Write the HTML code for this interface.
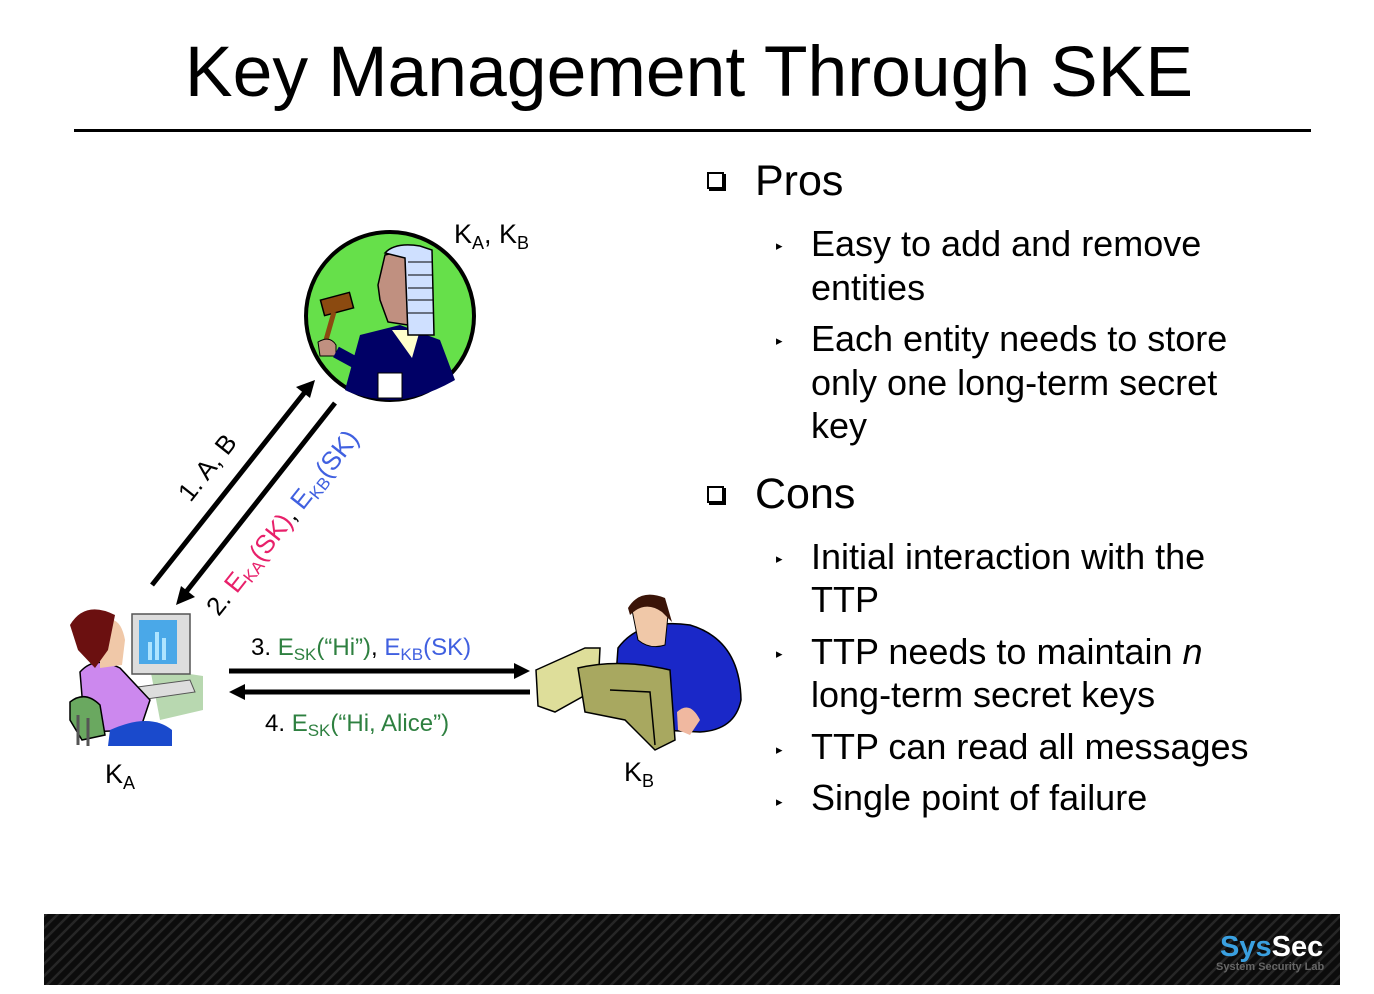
<!DOCTYPE html>
<html><head><meta charset="utf-8"><style>
html,body{margin:0;padding:0;background:#fff;}
body{width:1374px;height:994px;position:relative;overflow:hidden;font-family:"Liberation Sans","DejaVu Sans",sans-serif;}
.t{position:absolute;white-space:nowrap;color:#000;}
</style></head><body>
<div class="t" style="left:0;width:1378px;text-align:center;top:31px;font-size:71.5px;">Key Management Through SKE</div>
<div style="position:absolute;left:74px;top:129px;width:1237px;height:3px;background:#000"></div>

<div class="t" style="left:707px;top:172px;width:17px;height:17px;border:2px solid #000;box-sizing:border-box;box-shadow:2px 2px 0 #000"></div>
<div class="t" style="left:755px;top:157px;font-size:43px;">Pros</div>
<div class="t" style="left:707px;top:486px;width:17px;height:17px;border:2px solid #000;box-sizing:border-box;box-shadow:2px 2px 0 #000"></div>
<div class="t" style="left:755px;top:470px;font-size:43px;">Cons</div>

<div style="position:absolute;left:811px;top:222px;font-size:36px;line-height:43.5px;">
<div style="position:relative">Easy to add and remove<br>entities</div>
<div style="position:relative;margin-top:8px">Each entity needs to store<br>only one long-term secret<br>key</div>
<div style="position:relative;margin-top:87px">Initial interaction with the<br>TTP</div>
<div style="position:relative;margin-top:8px">TTP needs to maintain <i>n</i><br>long-term secret keys</div>
<div style="position:relative;margin-top:8px">TTP can read all messages</div>
<div style="position:relative;margin-top:8px">Single point of failure</div>
</div>
<div class="t" style="left:776px;top:238px;font-size:13px;">&#9656;</div>
<div class="t" style="left:776px;top:333px;font-size:13px;">&#9656;</div>
<div class="t" style="left:776px;top:551px;font-size:13px;">&#9656;</div>
<div class="t" style="left:776px;top:646px;font-size:13px;">&#9656;</div>
<div class="t" style="left:776px;top:742px;font-size:13px;">&#9656;</div>
<div class="t" style="left:776px;top:794px;font-size:13px;">&#9656;</div>

<svg width="1374" height="994" style="position:absolute;left:0;top:0" font-family="Liberation Sans, DejaVu Sans, sans-serif">
<circle cx="390" cy="316" r="84" fill="#66e04a" stroke="#000" stroke-width="4"/>
<path d="M345 390 L360 335 L400 325 L440 340 L455 380 Q420 400 390 400 Q360 398 345 390Z" fill="#000066"/>
<path d="M392 330 L420 330 L412 358 Z" fill="#ffffcc"/>
<path d="M385 255 L405 250 L408 325 L388 322 L380 300 L378 285Z" fill="#c09080" stroke="#000" stroke-width="1.5"/>
<path d="M385 253 Q395 242 420 246 L432 250 L434 335 L408 335 L405 258Z" fill="#cfe0ff" stroke="#000" stroke-width="1.5"/>
<path d="M408 262h25M408 275h25M408 288h25M408 300h25M408 313h25" stroke="#000" stroke-width="1"/>
<rect x="322" y="296" width="30" height="16" fill="#8b4a10" stroke="#000" stroke-width="1.5" transform="rotate(-15 337 304)"/>
<path d="M334 312 L326 340" stroke="#8b4a10" stroke-width="5"/>
<path d="M318 342 Q330 335 336 345 L336 356 L320 356Z" fill="#c09080" stroke="#000"/>
<path d="M336 352 L360 365" stroke="#000066" stroke-width="12"/>
<rect x="378" y="373" width="24" height="25" fill="#fff" stroke="#000"/>
<text x="454" y="243" font-size="27">K<tspan font-size="18" dy="6">A</tspan><tspan dy="-6">, K</tspan><tspan font-size="18" dy="6">B</tspan></text>

<line x1="152" y1="585" x2="305" y2="392" stroke="#000" stroke-width="5"/>
<polygon points="315,380 296,387 310,398" fill="#000"/>
<line x1="335" y1="403" x2="186" y2="592" stroke="#000" stroke-width="5"/>
<polygon points="176,605 181,586 195,597" fill="#000"/>
<g transform="translate(208,468) rotate(-51.6)"><text x="0" y="8" font-size="26" text-anchor="middle">1. A, B</text></g>
<g transform="translate(283,523) rotate(-51.6)"><text x="0" y="8" font-size="26" text-anchor="middle">2. <tspan fill="#e8206a">E<tspan font-size="17" dy="5">KA</tspan><tspan dy="-5">(SK)</tspan></tspan>, <tspan fill="#4060e0">E<tspan font-size="17" dy="5">KB</tspan><tspan dy="-5">(SK)</tspan></tspan></text></g>

<line x1="229" y1="671" x2="518" y2="671" stroke="#000" stroke-width="5"/>
<polygon points="530,671 514,663 514,679" fill="#000"/>
<line x1="530" y1="692" x2="241" y2="692" stroke="#000" stroke-width="5"/>
<polygon points="229,692 245,684 245,700" fill="#000"/>
<text x="251" y="655" font-size="24">3. <tspan fill="#2e8040">E<tspan font-size="17" dy="5">SK</tspan><tspan dy="-5">(“Hi”)</tspan></tspan>, <tspan fill="#4060e0">E<tspan font-size="17" dy="5">KB</tspan><tspan dy="-5">(SK)</tspan></tspan></text>
<text x="265" y="731" font-size="24">4. <tspan fill="#2e8040">E<tspan font-size="17" dy="5">SK</tspan><tspan dy="-5">(“Hi, Alice”)</tspan></tspan></text>

<path d="M150 668 L203 676 L203 710 L160 720 Z" fill="#b8d8b0"/>
<rect x="132" y="614" width="58" height="60" fill="#ddd" stroke="#555" stroke-width="1.5"/>
<rect x="139" y="620" width="38" height="44" fill="#4aa8e8"/>
<path d="M150 660v-18M157 660v-28M164 660v-22" stroke="#aee4ff" stroke-width="4"/>
<path d="M130 688 L190 680 L195 692 L140 700Z" fill="#ddd" stroke="#555"/>
<path d="M80 672 Q95 655 120 668 L150 700 L140 730 L85 732 Z" fill="#cc88ee" stroke="#000" stroke-width="1.5"/>
<path d="M100 622 Q120 612 125 640 L122 665 L100 668 Z" fill="#f0c8a8"/>
<path d="M70 625 Q85 600 115 615 L108 650 L95 668 L78 650 Z" fill="#6b1010"/>
<path d="M110 730 Q150 712 172 730 L172 746 L108 746 Z" fill="#1a4acc"/>
<path d="M70 702 Q85 690 100 705 L105 735 L82 740 L70 720Z" fill="#6aa860" stroke="#000" stroke-width="1.5"/>
<path d="M78 715v30M88 718v28" stroke="#555" stroke-width="3"/>
<text x="105" y="783" font-size="27">K<tspan font-size="18" dy="6">A</tspan></text>

<path d="M618 648 Q640 618 690 625 Q740 640 741 700 Q735 730 700 732 L660 730 L615 690 Z" fill="#1a28c8" stroke="#000" stroke-width="1.5"/>
<path d="M632 610 Q650 598 668 615 L665 645 Q650 650 638 640 Z" fill="#f0c8a8" stroke="#000"/>
<path d="M628 608 Q640 588 665 598 L672 622 L662 612 Q645 600 630 615Z" fill="#3a1408"/>
<path d="M677 712 Q690 700 700 720 L690 735 L678 730Z" fill="#f0b8a0"/>
<path d="M536 670 L585 648 L600 648 L598 688 L555 712 L538 706 Z" fill="#dede9a" stroke="#000" stroke-width="1.5"/>
<path d="M578 668 Q620 658 670 670 L675 740 L655 750 L625 720 L585 712 Z" fill="#a8a860" stroke="#000" stroke-width="1.5"/>
<path d="M610 690 L650 692 L655 745" stroke="#000" fill="none" stroke-width="1.5"/>
<text x="624" y="781" font-size="27">K<tspan font-size="18" dy="6">B</tspan></text>

<defs><pattern id="wv" width="12" height="12" patternUnits="userSpaceOnUse"><rect width="12" height="12" fill="#0c0c0c"/><path d="M0 12 L12 0M-3 3 L3 -3M9 15 L15 9" stroke="#262626" stroke-width="2.5"/></pattern></defs>
<rect x="44" y="914" width="1296" height="71" fill="url(#wv)"/>
<text x="1220" y="956" font-size="29" font-weight="bold" fill="#3aa0e0">Sys<tspan fill="#fff">Sec</tspan></text>
<text x="1216" y="970" font-size="11" font-weight="bold" fill="#666">System Security Lab</text>
</svg>
</body></html>
